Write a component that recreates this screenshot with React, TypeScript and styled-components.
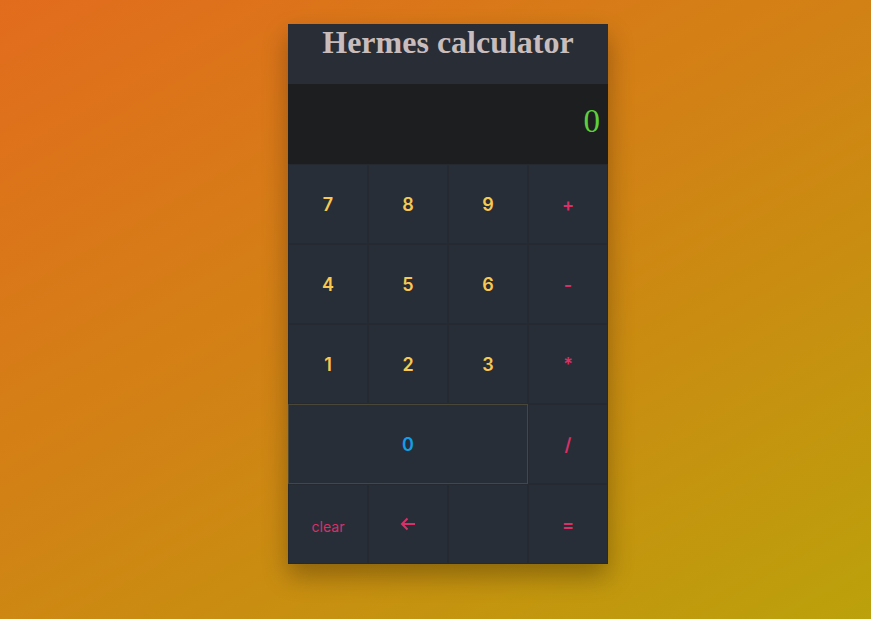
import React from "react";
import styled, { createGlobalStyle } from "styled-components";

const Global = createGlobalStyle`
  html, body { margin: 0; padding: 0; height: 100%; }
  body {
    background: linear-gradient(150deg, #e26c1d 0%, #d08414 50%, #bba10b 100%);
    min-height: 619px;
    font-family: Inter, "Liberation Sans", sans-serif;
  }
  #root { min-height: 619px; }
`;

const Page = styled.div`
  display: flex;
  justify-content: center;
  padding-top: 24px;
  padding-left: 25px;
`;

const Calculator = styled.div`
  width: 320px;
  background: #282c34;
  box-shadow: 0 12px 24px rgba(0, 0, 0, 0.3);
  display: flex;
  flex-direction: column;
`;

const Header = styled.h1`
  margin: 0;
  height: 60px;
  background: #282d36;
  color: #c8bcbc;
  font-family: "Liberation Serif", "Times New Roman", serif;
  font-weight: bold;
  font-size: 32px;
  line-height: 36px;
  text-align: center;
`;

const Display = styled.div`
  height: 80px;
  box-sizing: border-box;
  background: #1c1e20;
  color: #5ccf3c;
  font-family: "Liberation Serif", "Times New Roman", serif;
  font-size: 33px;
  display: flex;
  align-items: center;
  justify-content: flex-end;
  padding: 0 8px 6px 0;
`;

const Keys = styled.div`
  display: grid;
  grid-template-columns: repeat(4, 80px);
  grid-auto-rows: 80px;
`;

type Kind = "num" | "op" | "zero" | "blank";

const colors: Record<Kind, string> = {
  num: "#f8c851",
  op: "#d83067",
  zero: "#129ee8",
  blank: "#d83067",
};

const Key = styled.button<{ $kind: Kind; $span?: number; $small?: boolean }>`
  grid-column: span ${(p) => p.$span ?? 1};
  background: #282e37;
  border: 1px solid ${(p) => (p.$kind === "zero" ? "#4a4738" : "#252a31")};
  color: ${(p) => colors[p.$kind]};
  font-family: Inter, "Liberation Sans", sans-serif;
  font-size: ${(p) => (p.$small ? "14px" : "18px")};
  font-weight: ${(p) => (p.$small ? 400 : 600)};
  padding: ${(p) => (p.$small ? "5px 0 0" : "0")};
  margin: 0;
  display: flex;
  align-items: center;
  justify-content: center;
  cursor: pointer;
`;

const Arrow = () => (
  <svg width="16" height="14" viewBox="0 0 16 14" fill="none" stroke="#d83067" strokeWidth="2">
    <path d="M15 7H2M7.5 1.5L2 7l5.5 5.5" />
  </svg>
);

export default function App() {
  return (
    <>
      <Global />
      <Page>
        <Calculator>
          <Header>Hermes calculator</Header>
          <Display>0</Display>
          <Keys>
            <Key $kind="num">7</Key>
            <Key $kind="num">8</Key>
            <Key $kind="num">9</Key>
            <Key $kind="op">+</Key>
            <Key $kind="num">4</Key>
            <Key $kind="num">5</Key>
            <Key $kind="num">6</Key>
            <Key $kind="op">-</Key>
            <Key $kind="num">1</Key>
            <Key $kind="num">2</Key>
            <Key $kind="num">3</Key>
            <Key $kind="op">*</Key>
            <Key $kind="zero" $span={3}>0</Key>
            <Key $kind="op">/</Key>
            <Key $kind="op" $small>clear</Key>
            <Key $kind="op"><Arrow /></Key>
            <Key $kind="blank"></Key>
            <Key $kind="op">=</Key>
          </Keys>
        </Calculator>
      </Page>
    </>
  );
}
